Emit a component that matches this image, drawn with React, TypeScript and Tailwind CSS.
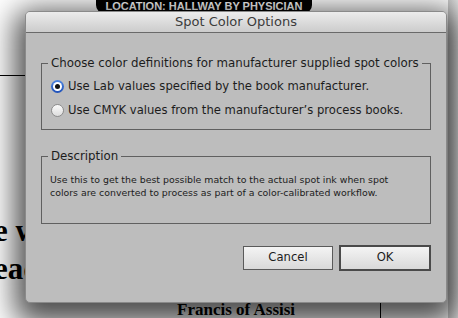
import React from "react";

const ui = { fontFamily: '"DejaVu Sans", "Liberation Sans", sans-serif' };
const serif = { fontFamily: '"Liberation Serif", "DejaVu Serif", serif' };

function Radio({ checked }: { checked?: boolean }) {
  if (checked) {
    return (
      <span className="flex h-[13px] w-[13px] items-center justify-center rounded-full bg-gradient-to-b from-[#4f86e0] to-[#1d4fb8]">
        <span className="flex h-[9px] w-[9px] items-center justify-center rounded-full bg-white">
          <span className="h-[5px] w-[5px] rounded-full bg-[#111]" />
        </span>
      </span>
    );
  }
  return (
    <span className="h-[13px] w-[13px] rounded-full border border-[#8c8c8c] bg-gradient-to-b from-[#fbfbfb] to-[#dcdcdc]" />
  );
}

export default function App() {
  return (
    <div className="relative h-[318px] w-[458px] overflow-hidden bg-white">
      {/* Underlying document */}
      <div className="absolute left-[96px] top-[-8px] flex h-[22px] w-[216px] items-end justify-center rounded-[9px] bg-black pb-[1px]">
        <span className="text-[11px] font-bold leading-[14px] text-white" style={{ fontFamily: '"Liberation Sans", Arial, sans-serif' }}>
          LOCATION: HALLWAY BY PHYSICIAN
        </span>
      </div>
      <div className="absolute left-0 top-[75px] h-px w-[40px] bg-black" />
      <div className="absolute left-[-6px] top-[212px] text-[31px] font-bold leading-[38px] text-black" style={serif}>
        <div>e we</div>
        <div>ead</div>
      </div>
      <div className="absolute left-[177px] top-[300px] text-[17px] font-bold leading-[20px] text-black" style={serif}>
        Francis of Assisi
      </div>
      <div className="absolute left-[380px] top-[300px] h-[20px] w-px bg-black" />
      <div className="absolute right-0 top-0 h-full w-[10px] bg-gradient-to-r from-[#c8c8c8] to-[#e2e2e2]" />

      {/* Dialog */}
      <div
        className="absolute left-[25px] top-[11px] flex h-[292px] w-[422px] flex-col overflow-hidden rounded-[5px] border border-[#8a8a8a] bg-[#bdbdbd] shadow-[0_10px_30px_10px_rgba(0,0,0,0.7)]"
        style={ui}
      >
        <div className="flex h-[21px] shrink-0 items-center justify-center border-b border-[#6a6a6a] bg-gradient-to-b from-[#ececec] to-[#cccccc]">
          <span className="text-[13px] leading-[16px] text-[#3c3c3c]">Spot Color Options</span>
        </div>

        <div className="flex flex-col px-[15px] pt-[23px] text-[#1c1c1c]">
          <fieldset className="border border-[#606060] px-[8px] pb-[11px]">
            <legend className="ml-[-2px] px-[3px] text-[11.8px] leading-[14px]">
              Choose color definitions for manufacturer supplied spot colors
            </legend>
            <div className="mt-[8px] flex items-center gap-[4px] pl-[1px] text-[11.6px] leading-[16px]">
              <Radio checked />
              <span>Use Lab values specified by the book manufacturer.</span>
            </div>
            <div className="mt-[8px] flex items-center gap-[4px] pl-[1px] text-[11.6px] leading-[16px]">
              <Radio />
              <span>Use CMYK values from the manufacturer&#8217;s process books.</span>
            </div>
          </fieldset>

          <fieldset className="mt-[19px] h-[75px] border border-[#606060] px-[8px]">
            <legend className="ml-[-2px] px-[3px] text-[11.8px] leading-[14px]">Description</legend>
            <p className="mt-[10px] text-[9.4px] leading-[13px]">
              Use this to get the best possible match to the actual spot ink when spot
              <br />
              colors are converted to process as part of a color-calibrated workflow.
            </p>
          </fieldset>

          <div className="mt-[21px] flex items-center justify-end gap-[6px]">
            <button className="h-[24px] w-[90px] border border-[#5a5a5a] bg-gradient-to-b from-[#f4f4f4] to-[#d9d9d9] text-[11.6px] text-[#1c1c1c]">
              Cancel
            </button>
            <button className="h-[26px] w-[92px] border-2 border-[#4a4a4a] bg-gradient-to-b from-[#f4f4f4] to-[#d9d9d9] text-[11.6px] text-[#1c1c1c]">
              OK
            </button>
          </div>
        </div>
      </div>
    </div>
  );
}
